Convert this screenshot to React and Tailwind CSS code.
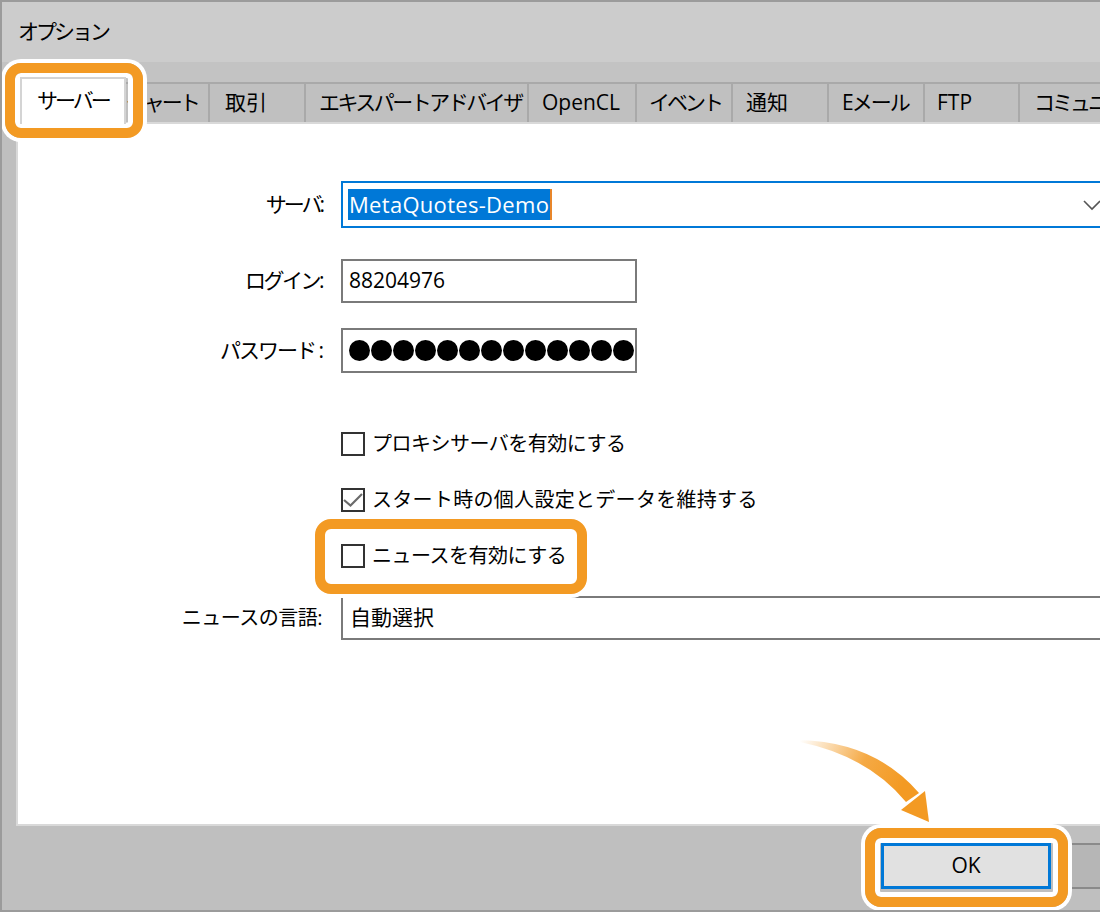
import React from "react";

const tabs = [
  { label: "チャート", cls: "w-[84px] pl-0 tracking-[-3px]" },
  { label: "取引", cls: "w-[96px] pl-[15px]" },
  { label: "エキスパートアドバイザ", cls: "w-[223px] pl-[13px] tracking-[-2.5px]" },
  { label: "OpenCL", cls: "w-[108px] pl-[13px]" },
  { label: "イベント", cls: "w-[96px] pl-[12px] tracking-[-3px]" },
  { label: "通知", cls: "w-[96px] pl-[13px]" },
  { label: "Eメール", cls: "w-[96px] pl-[13px] tracking-[-2px]" },
  { label: "FTP", cls: "w-[95px] pl-[12px]" },
  { label: "コミュニケーション", cls: "w-[200px] pl-[14px] tracking-[-3px]" },
];

function Checkbox({ checked, label, track }) {
  return (
    <div className="flex items-center h-[32px] pl-[323px]">
      <div className="w-[24px] h-[24px] border-2 border-[#333333] bg-white flex items-center justify-center shrink-0">
        {checked && (
          <svg width="20" height="20" viewBox="0 0 20 20">
            <polyline points="1,10 7.5,15.5 19,4" fill="none" stroke="#6b6b6b" strokeWidth="2.2" />
          </svg>
        )}
      </div>
      <span className={"ml-[7px] text-[20px] text-black " + track}>{label}</span>
    </div>
  );
}

function Highlight({ cls }) {
  return (
    <div
      className={
        "absolute pointer-events-none border-[10px] border-[#f39a23] rounded-[16px] shadow-[0_0_0_4px_#ffffff,inset_0_0_0_5px_#ffffff] " +
        cls
      }
    />
  );
}

export default function App() {
  return (
    <div className="relative w-[1100px] h-[912px] overflow-hidden flex flex-col bg-[#bfbfbf] border-l-2 border-t-2 border-b-2 border-[#9b9b9b] font-['Open_Sans','Noto_Sans_CJK_JP',sans-serif] text-black">
      {/* title */}
      <div className="h-[60px] shrink-0 bg-[#cccccc] pl-[16px] flex items-center">
        <span className="text-[21px] tracking-[-3px]">オプション</span>
      </div>

      {/* tabs */}
      <div className="h-[60px] shrink-0 bg-[#c3c3c3] flex items-end pl-[18px]">
        <div className="relative z-10 -mb-[2px] h-[47px] w-[106px] shrink-0 bg-white border-2 border-b-0 border-[#d4d4d4] flex items-center pl-[15px] pb-[2px]">
          <span className="text-[21px] tracking-[-3px]">サーバー</span>
        </div>
        <div className="flex h-[40px] border-t-2 border-[#a9a9a9] bg-[#c0c0c0]">
          {tabs.map((t) => (
            <div
              key={t.label}
              className={"h-full shrink-0 flex items-center border-r-2 border-[#a9a9a9] text-[21px] whitespace-nowrap overflow-hidden " + t.cls}
            >
              {t.label}
            </div>
          ))}
        </div>
      </div>

      {/* content */}
      <div className="flex-1 flex min-h-0">
        <div className="w-[14px] shrink-0" />
        <div className="flex-1 bg-white border-l-2 border-t-2 border-b-2 border-[#d9d9d9] flex flex-col pt-[57px] overflow-hidden">
          <div className="flex items-center">
            <div className="w-[304px] shrink-0 text-right text-[21px] tracking-[-3px]">サーバ:</div>
            <div className="ml-[19px] w-[770px] shrink-0 h-[47px] border-2 border-[#0078d7] flex items-center justify-between pl-[5px] pr-[8px]">
              <div className="flex items-center h-[31px]">
                <span className="bg-[#0078d7] text-white text-[22px] tracking-[0.3px] leading-[31px] px-[1px]">MetaQuotes-Demo</span>
                <span className="w-[2px] h-[31px] bg-[#e8862a]" />
              </div>
              <svg width="18" height="12" viewBox="0 0 18 12">
                <polyline points="1,2 9,10 17,2" fill="none" stroke="#555555" strokeWidth="1.6" />
              </svg>
            </div>
          </div>

          <div className="flex items-center mt-[31px]">
            <div className="w-[304px] shrink-0 text-right text-[21px] tracking-[-2.5px]">ログイン:</div>
            <div className="ml-[19px] w-[296px] h-[44px] border-2 border-[#7a7a7a] flex items-center pl-[6px]">
              <span className="text-[21px]">88204976</span>
            </div>
          </div>

          <div className="flex items-center mt-[25px]">
            <div className="w-[304px] shrink-0 text-right text-[21px] tracking-[-2px]">パスワード :</div>
            <div className="ml-[19px] w-[296px] h-[45px] border-2 border-[#7a7a7a] flex items-center gap-[1px] pl-[6px] overflow-hidden">
              {Array.from({ length: 13 }).map((_, i) => (
                <div key={i} className="w-[21px] h-[21px] rounded-full bg-black shrink-0" />
              ))}
            </div>
          </div>

          <div className="mt-[55px] flex flex-col gap-[24px]">
            <Checkbox label="プロキシサーバを有効にする" track="tracking-[-0.5px]" />
            <Checkbox checked label="スタート時の個人設定とデータを維持する" track="tracking-[0.3px]" />
            <Checkbox label="ニュースを有効にする" track="tracking-[-0.5px]" />
          </div>

          <div className="flex items-center mt-[24px]">
            <div className="w-[304px] shrink-0 text-right text-[20px] tracking-[-0.5px]">ニュースの言語:</div>
            <div className="ml-[19px] w-[800px] shrink-0 h-[44px] border-2 border-[#7a7a7a] flex items-center pl-[7px]">
              <span className="text-[21px]">自動選択</span>
            </div>
          </div>
        </div>
      </div>

      {/* buttons */}
      <div className="h-[84px] shrink-0 flex justify-end items-start pt-[17px] gap-[20px]">
        <div className="w-[170px] h-[46px] shrink-0 bg-[#e1e1e1] border-[3px] border-[#0078d7] flex items-center justify-center">
          <span className="text-[21px]">OK</span>
        </div>
        <div className="w-[170px] h-[46px] shrink-0 -mr-[141px] bg-[#b6b6b6] border-y-2 border-[#8a8a8a]" />
      </div>

      {/* overlays */}
      <Highlight cls="left-[3px] top-[61px] w-[138px] h-[75px]" />
      <Highlight cls="left-[313px] top-[517px] w-[272px] h-[75px]" />
      <Highlight cls="left-[863px] top-[826px] w-[203px] h-[79px]" />

      <svg className="absolute left-[778px] top-[718px] pointer-events-none" width="170" height="110" viewBox="0 0 170 110">
        <defs>
          <linearGradient id="arr" x1="20" y1="20" x2="120" y2="70" gradientUnits="userSpaceOnUse">
            <stop offset="0" stopColor="#f39a23" stopOpacity="0" />
            <stop offset="0.6" stopColor="#f39a23" stopOpacity="0.85" />
            <stop offset="1" stopColor="#f39a23" stopOpacity="1" />
          </linearGradient>
        </defs>
        <path d="M20 20 Q95 22 139 73 L126 82 Q88 36 20 22 Z" fill="url(#arr)" />
        <polygon points="121,90 145,71 149,102" fill="#f39a23" />
      </svg>
    </div>
  );
}
